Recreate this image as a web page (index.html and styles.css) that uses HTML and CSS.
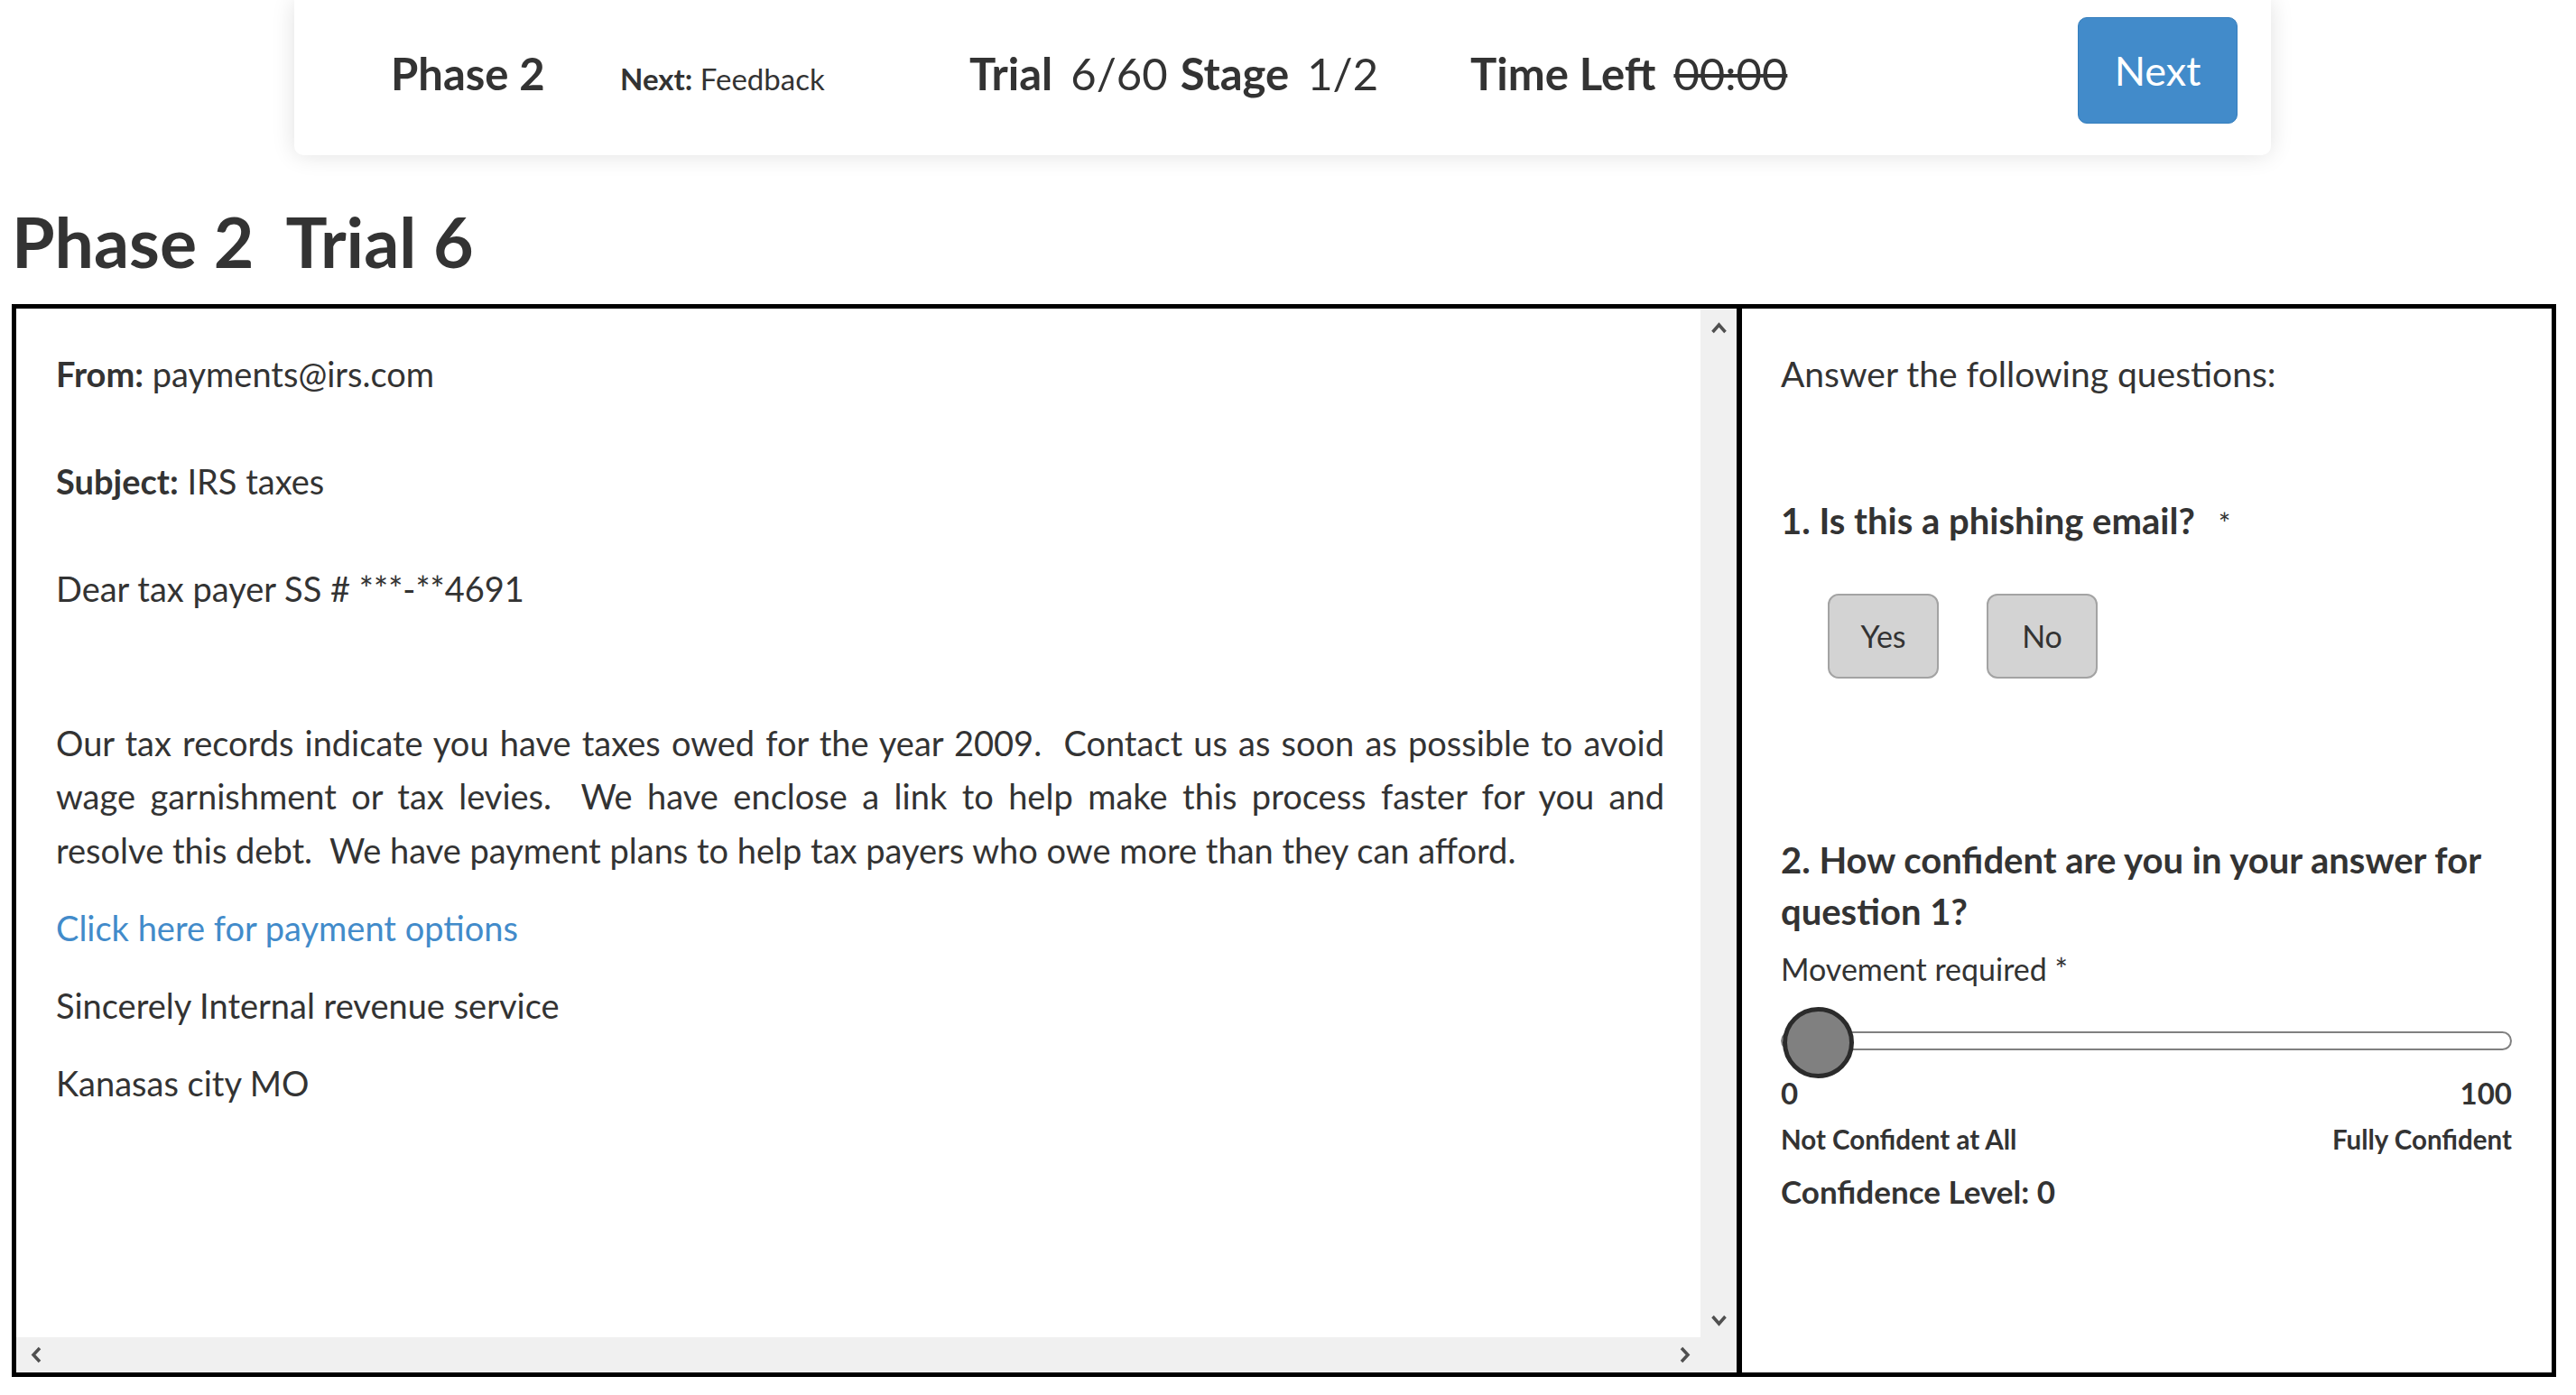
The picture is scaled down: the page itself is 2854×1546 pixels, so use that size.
FILE: index.html
```html
<!DOCTYPE html>
<html lang="en">
<head>
<meta charset="UTF-8">
<meta name="viewport" content="width=device-width, initial-scale=1.0">
<title>Phase 2 Trial 6</title>
<link rel="stylesheet" href="styles.css">
</head>
<body>

<div class="topbar">
    <div class="status">
        <div class="phase">Phase 2</div>
        <div class="next-up"><b>Next:</b> Feedback</div>
        <div class="progress"><b>Trial</b><span class="val">6/60</span><b>Stage</b><span class="val">1/2</span></div>
        <div class="timer"><b>Time Left</b><s>00:00</s></div>
    </div>
    <button class="next-button">Next</button>
</div>

<h1 class="trial-title">Phase 2&nbsp; Trial 6</h1>

<div class="trial-box">

  <!-- Email pane -->
  <div class="email">
    <div class="email-body">
      <p class="gap-line"><b>From:</b> payments@irs.com</p>
      <p class="gap-line"><b>Subject:</b> IRS taxes</p>
      <p class="greeting">Dear tax payer SS # ***-**4691</p>
      <p class="email-text">Our tax records indicate you have taxes owed for the year 2009.&nbsp; Contact us as soon as possible to avoid wage garnishment or tax levies.&nbsp; We have enclose a link to help make this process faster for you and resolve this debt.&nbsp; We have payment plans to help tax payers who owe more than they can afford.</p>
      <p><a href="#">Click here for payment options</a></p>
      <p>Sincerely Internal revenue service</p>
      <p>Kanasas city MO</p>
    </div>
    <div class="vbar">
      <svg width="19" height="13" viewBox="0 0 19 13"><polyline points="2.5,11 9.5,3 16.5,11" /></svg>
      <svg width="19" height="13" viewBox="0 0 19 13"><polyline points="2.5,2 9.5,10 16.5,2" /></svg>
    </div>
    <div class="hbar">
      <svg width="16" height="19" viewBox="0 0 16 19"><polyline points="12,2 5,9.5 12,17" /></svg>
      <svg width="16" height="19" viewBox="0 0 16 19"><polyline points="4,2 11,9.5 4,17" /></svg>
    </div>
    <div class="corner"></div>
  </div>

  <!-- Questions pane -->
  <div class="questions">
    <p class="intro">Answer the following questions:</p>

    <p class="question">1. Is this a phishing email?<span class="req">*</span></p>
    <div class="answer-buttons">
      <button class="answer-button">Yes</button>
      <button class="answer-button">No</button>
    </div>

    <p class="question">2. How confident are you in your answer for question 1?</p>
    <p class="required-note">Movement required *</p>
    <input type="range" class="slider" min="0" max="100" value="0">
    <div class="scale">
      <span>0</span>
      <span>100</span>
    </div>
    <div class="scale scale-labels">
      <span>Not Confident at All</span>
      <span>Fully Confident</span>
    </div>
    <p class="level">Confidence Level: 0</p>
  </div>

</div>

</body>
</html>
```

FILE: styles.css
```css
body {
    margin: 0;
    font-family: "Lato", "Liberation Sans", sans-serif;
    color: #333;
    background-color: #fff;
}

.topbar {
    display: flex;
    align-items: center;
    width: 2190px;
    height: 172px;
    margin-left: 326px;
    padding: 0 37px 0 107px;
    box-sizing: border-box;
    background-color: #fff;
    border-radius: 0 0 10px 10px;
    box-shadow: 0 0 26px rgba(0, 0, 0, 0.12);
}

.status {
    display: flex;
    align-items: baseline;
    margin-bottom: 4px;
    font-size: 49px;
    line-height: 58.8px;
}

.phase {
    width: 254px;
    font-weight: bold;
}

.next-up {
    width: 387px;
    font-size: 33px;
}

.progress {
    width: 555px;
}

.progress b,
.timer b {
    margin-right: 20px;
}

.progress .val {
    margin-right: 14px;
}

.next-button {
    margin-left: auto;
    margin-bottom: 16px;
    width: 177px;
    height: 118px;
    border: 1px solid #357ebd;
    border-radius: 10px;
    background-color: #428bca;
    color: #fff;
    font-family: inherit;
    font-size: 45px;
    cursor: pointer;
}

.trial-title {
    margin: 57.5px 0 32.5px 13px;
    font-size: 77px;
    line-height: 75px;
    font-weight: bold;
}

.trial-box {
    display: flex;
    width: 2819px;
    height: 1189px;
    margin-left: 13px;
    box-sizing: border-box;
    border: 5px solid #000;
}

/* email pane with its scrollbars */
.email {
    flex: none;
    width: 1906px;
    display: grid;
    grid-template-columns: 1fr 40px;
    grid-template-rows: 1fr 39px;
    border-right: 6px solid #000;
}

.email-body {
    padding: 42.5px 40px 0 44px;
    font-size: 38px;
    line-height: 59.5px;
    overflow: hidden;
}

.email-body p {
    margin: 0 0 26.5px;
}

.email-body p.gap-line {
    margin-bottom: 59.5px;
}

.email-body p.greeting {
    margin-bottom: 111.5px;
}

.email-text {
    text-align: justify;
}

.email-body a {
    color: #428bca;
    text-decoration: none;
}

.vbar,
.hbar,
.corner {
    background-color: #f0f0f0;
}

.vbar {
    display: flex;
    flex-direction: column;
    justify-content: space-between;
    align-items: center;
    padding: 15px 0 12px;
}

.hbar {
    display: flex;
    justify-content: space-between;
    align-items: center;
    padding: 0 9px 0 14px;
}

.vbar svg,
.hbar svg {
    fill: none;
    stroke: #505050;
    stroke-width: 3.5;
}

/* questions pane */
.questions {
    flex: 1;
    padding: 42.5px 44px 0 43px;
}

.intro {
    margin: 0 0 105.4px;
    font-size: 39px;
    line-height: 59.5px;
}

.question {
    margin: 0;
    font-size: 40px;
    line-height: 57px;
    font-weight: bold;
}

.req {
    margin-left: 26px;
    font-size: 32px;
    font-weight: normal;
}

.answer-buttons {
    display: flex;
    gap: 53px;
    margin: 49.6px 0 173.4px 52px;
}

.answer-button {
    width: 123px;
    height: 94px;
    border: 2px solid #a3a3a3;
    border-radius: 12px;
    background-color: #d3d3d3;
    color: #333;
    font-family: inherit;
    font-size: 34px;
    cursor: pointer;
}

.required-note {
    margin: 14.2px 0 20.4px;
    font-size: 34px;
    line-height: 40px;
}

.slider {
    -webkit-appearance: none;
    appearance: none;
    display: block;
    width: 100%;
    height: 79px;
    margin: 0;
    background: transparent;
}

.slider::-webkit-slider-runnable-track {
    height: 21px;
    border: 2px solid #808080;
    border-radius: 13px;
    background-color: #fff;
}

.slider::-webkit-slider-thumb {
    -webkit-appearance: none;
    box-sizing: border-box;
    width: 79px;
    height: 79px;
    margin-top: -29px;
    border: 5px solid #2b2b2b;
    border-radius: 50%;
    background-color: #808080;
}

.scale {
    display: flex;
    justify-content: space-between;
    margin-top: -2.4px;
    font-size: 33px;
    line-height: 40px;
    font-weight: bold;
}

.scale-labels {
    margin-top: 12.6px;
    font-size: 29.5px;
}

.level {
    margin: 17px 0 0;
    font-size: 35px;
    line-height: 40px;
    font-weight: bold;
}
```
